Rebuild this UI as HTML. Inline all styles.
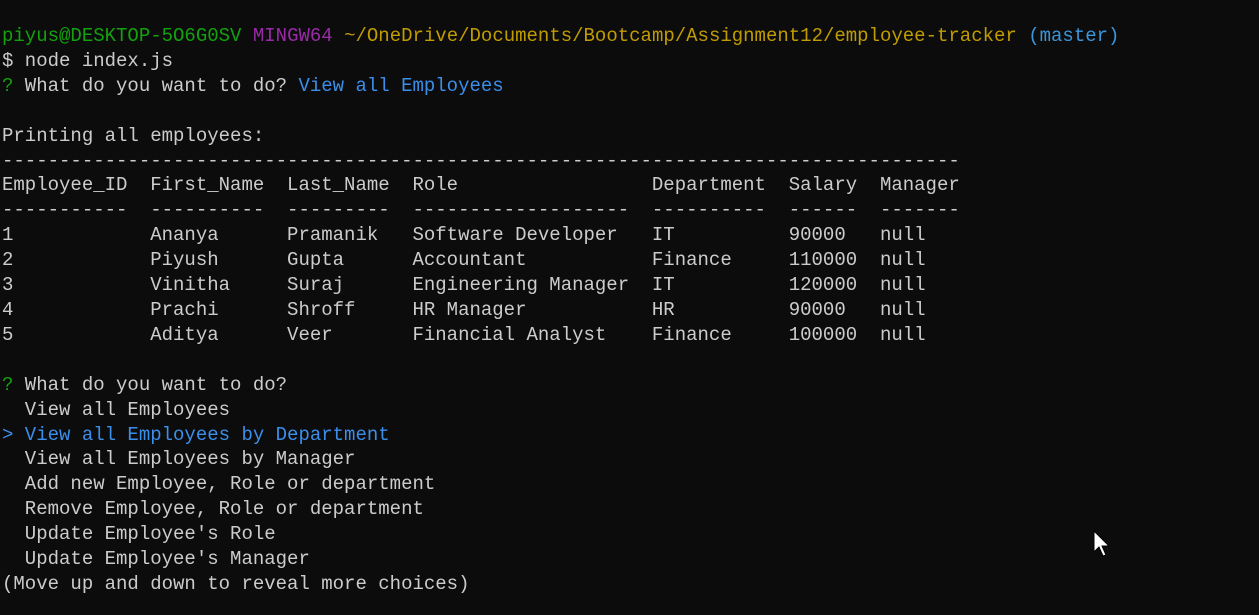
<!DOCTYPE html>
<html><head><style>
html,body{margin:0;padding:0;background:#0c0c0c;width:1259px;height:615px;overflow:hidden}
pre{margin:0;position:absolute;left:2px;top:24px;font-family:"Liberation Mono",monospace;font-size:19px;line-height:24.9px;color:#cccccc;letter-spacing:0}
.g{color:#13a10e}.p{color:#9a2aa8}.y{color:#c19c00}.b{color:#3b8eea}.c{color:#3a96dd}
</style></head><body>
<pre><span class="g">piyus@DESKTOP-5O6G0SV</span> <span class="p">MINGW64</span> <span class="y">~/OneDrive/Documents/Bootcamp/Assignment12/employee-tracker</span> <span class="c">(master)</span>
$ node index.js
<span class="g">?</span> What do you want to do? <span class="b">View all Employees</span>

Printing all employees:
------------------------------------------------------------------------------------
Employee_ID  First_Name  Last_Name  Role                 Department  Salary  Manager
-----------  ----------  ---------  -------------------  ----------  ------  -------
1            Ananya      Pramanik   Software Developer   IT          90000   null
2            Piyush      Gupta      Accountant           Finance     110000  null
3            Vinitha     Suraj      Engineering Manager  IT          120000  null
4            Prachi      Shroff     HR Manager           HR          90000   null
5            Aditya      Veer       Financial Analyst    Finance     100000  null

<span class="g">?</span> What do you want to do?
  View all Employees
<span class="b">&gt; View all Employees by Department</span>
  View all Employees by Manager
  Add new Employee, Role or department
  Remove Employee, Role or department
  Update Employee's Role
  Update Employee's Manager
(Move up and down to reveal more choices)</pre>
<svg style="position:absolute;left:1093px;top:530px" width="20" height="30" viewBox="0 0 20 30"><path d="M1 1 L1 22 L6 17 L10 26 L13 25 L9 16 L16 16 Z" fill="#fff" stroke="#000" stroke-width="1"/></svg>
</body></html>
